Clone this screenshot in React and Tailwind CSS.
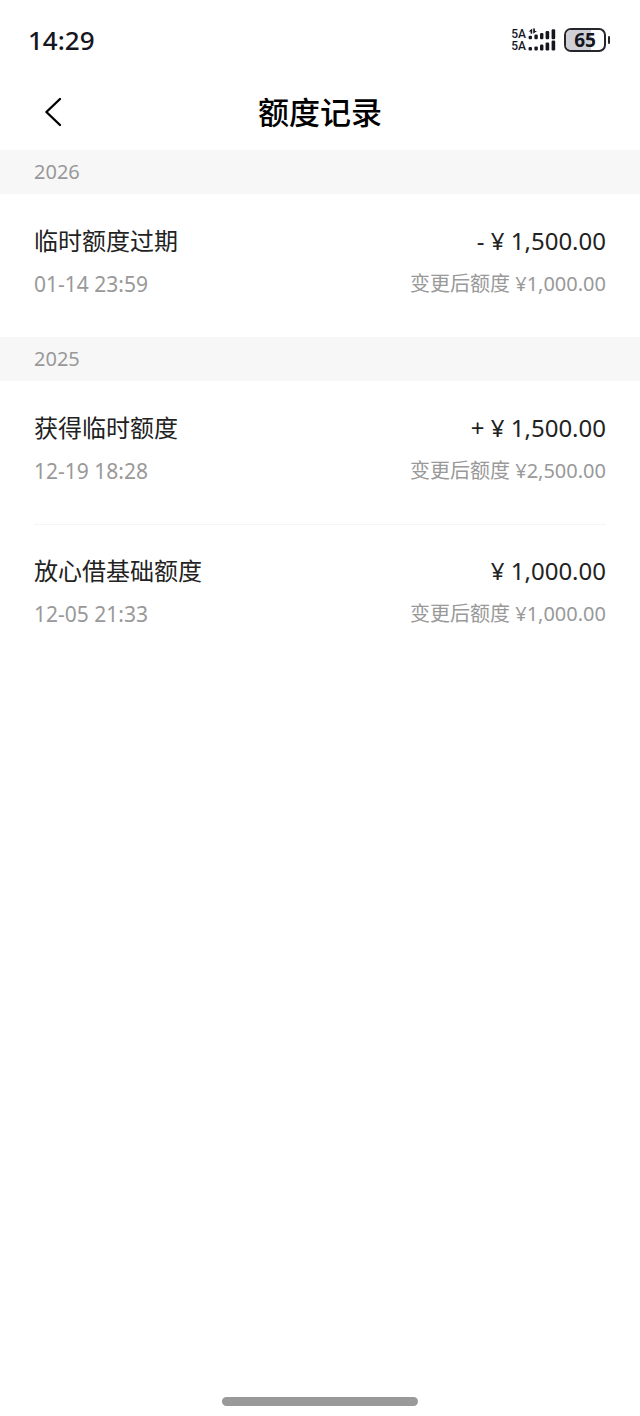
const sections = [
  {
    year: '2026',
    records: [
      { title: '临时额度过期', time: '01-14 23:59', amount: '- ¥ 1,500.00', after: '¥1,000.00' },
    ],
  },
  {
    year: '2025',
    records: [
      { title: '获得临时额度', time: '12-19 18:28', amount: '+ ¥ 1,500.00', after: '¥2,500.00' },
      { title: '放心借基础额度', time: '12-05 21:33', amount: '¥ 1,000.00', after: '¥1,000.00' },
    ],
  },
];

function SignalBars() {
  return (
    <svg width="28" height="24" viewBox="0 0 28 24" fill="#16161f" aria-hidden="true">
      {/* data arrows */}
      <path d="M4.2 0.4 L0.6 3.4 H2.6 V5.8 H4.2 Z" />
      <path d="M5.2 0.4 V5.8 L9 3 H6.9 V0.4 Z" />
      <rect x="0.6" y="7.8" width="3.4" height="3.4" rx="1.2" />
      <rect x="6.4" y="6.6" width="3.4" height="4.6" rx="1.2" />
      <rect x="12" y="5" width="3.4" height="6.2" rx="1.2" />
      <rect x="17.6" y="3" width="3.6" height="8.2" rx="1.2" />
      <rect x="23.6" y="1.2" width="3.6" height="10" rx="1.2" />
      <rect x="0.6" y="19" width="3.4" height="3.4" rx="1.2" />
      <rect x="6.4" y="18.4" width="3.4" height="4" rx="1.2" />
      <rect x="12" y="16.6" width="3.4" height="5.8" rx="1.2" />
      <rect x="17.6" y="14.6" width="3.6" height="7.8" rx="1.2" />
      <rect x="23.6" y="12.6" width="3.6" height="9.8" rx="1.2" />
    </svg>
  );
}

function Battery({ level }) {
  return (
    <div className="flex items-center gap-0.5">
      <div className="relative flex h-6 w-[42px] items-center justify-center overflow-hidden rounded-[7px] border-2 border-[#25252c]">
        <div className="absolute inset-y-0 left-0 bg-[#cfcfd6]" style={{ width: `${level}%` }} />
        <span className="relative text-[19px] leading-5 font-bold">{level}</span>
      </div>
      <div className="h-2 w-0.5 rounded-full bg-[#25252c]" />
    </div>
  );
}

function StatusBar() {
  return (
    <div className="flex h-20 items-center justify-between pr-[30px] pl-7 text-[#16161f]">
      <span className="text-[26px] font-medium">14:29</span>
      <div className="flex items-center gap-2">
        <div className="flex items-center gap-0.5">
          <div className="flex flex-col font-['Roboto',sans-serif] text-[12px] leading-3 font-medium">
            <span>5A</span>
            <span>5A</span>
          </div>
          <SignalBars />
        </div>
        <Battery level={65} />
      </div>
    </div>
  );
}

function RecordItem({ record }) {
  return (
    <li className="flex justify-between border-t border-[#f5f5f5] pt-[29px] pb-[39px] first:border-transparent">
      <div className="flex flex-col gap-3">
        <span className="text-[24px] leading-[34px] text-[#222]">{record.title}</span>
        <span className="text-[21px] leading-7 text-[#999]">{record.time}</span>
      </div>
      <div className="flex flex-col gap-3 text-right">
        <span className="text-[24px] leading-[34px] text-[#222]">{record.amount}</span>
        <span className="text-[20px] leading-7 text-[#999]">变更后额度 {record.after}</span>
      </div>
    </li>
  );
}

export default function App() {
  return (
    <div className="flex min-h-screen flex-col bg-white font-['Noto_Sans','Noto_Sans_CJK_SC',sans-serif]">
      <StatusBar />

      <header className="grid h-[70px] grid-cols-[1fr_auto_1fr] items-center px-8 pb-1.5">
        <button type="button" aria-label="返回" className="flex h-10 w-10 items-center justify-center">
          <svg width="20" height="30" viewBox="0 0 20 30" fill="none" stroke="#000" strokeWidth="2.4" strokeLinecap="round" strokeLinejoin="round">
            <path d="M18 2 L4.4 15 L18 28" />
          </svg>
        </button>
        <h1 className="text-[31px] leading-10 font-medium text-black">额度记录</h1>
      </header>

      <main className="flex-1">
        {sections.map((section) => (
          <section key={section.year}>
            <h2 className="bg-[#f7f7f7] px-[34px] text-[20px] leading-[44px] text-[#999]">{section.year}</h2>
            <ul className="px-[34px]">
              {section.records.map((record) => (
                <RecordItem key={record.time} record={record} />
              ))}
            </ul>
          </section>
        ))}
      </main>

      <div className="flex justify-center pb-2.5">
        <div className="h-[9px] w-[196px] rounded-full bg-[#999]" />
      </div>
    </div>
  );
}
